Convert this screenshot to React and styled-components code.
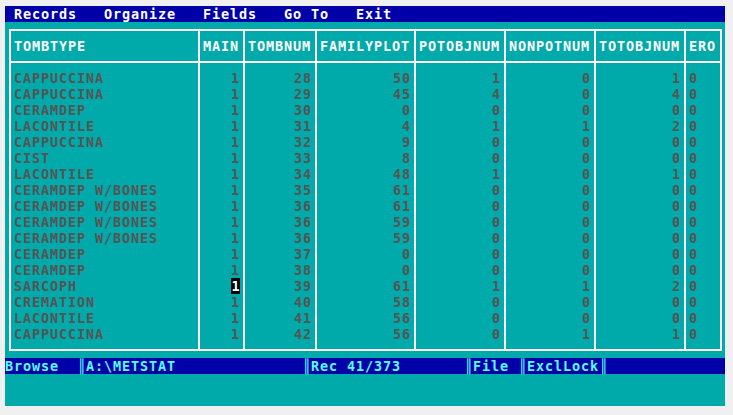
import styled, { createGlobalStyle } from "styled-components";

const GlobalStyle = createGlobalStyle`
  html, body {
    margin: 0;
    padding: 0;
    background: #f0f0f0;
  }
`;

const BLUE = "#0000a8";
const TEAL = "#00aaaa";
const CELL = 9;
const COLUMNS = "189px 45px 72px 99px 90px 90px 90px 34px";

const Screen = styled.div`
  width: 720px;
  height: 400px;
  margin: 6px 0 0 5px;
  background: ${TEAL};
  display: flex;
  flex-direction: column;
  font-family: "DejaVu Sans Mono", "Liberation Mono", monospace;
  font-size: 13.5px;
  letter-spacing: 0.87px;
  font-weight: bold;
  line-height: 16px;
  white-space: pre;
  overflow: hidden;
`;

const MenuBar = styled.nav`
  height: 16px;
  background: ${BLUE};
  color: #ffffff;
  display: flex;
  gap: ${CELL * 3}px;
  padding-left: ${CELL}px;
`;

const MenuItem = styled.span`
  flex: none;
`;

const Box = styled.div`
  margin: 7px 3px 7px 4px;
  border: 2px solid #ffffff;
  display: flex;
  flex-direction: column;
`;

const Row = styled.div`
  display: grid;
  grid-template-columns: ${COLUMNS};
`;

const HeadCell = styled.div`
  padding: 7px 3px;
  color: #ffffff;
  border-bottom: 2px solid #ffffff;
  border-right: 2px solid #ffffff;
  overflow: hidden;
  &:last-child {
    border-right: none;
  }
`;

const DataRow = styled(Row)`
  &:first-child > * {
    padding-top: 7px;
  }
  &:last-child > * {
    padding-bottom: 7px;
  }
`;

const Cell = styled.div`
  height: 16px;
  box-sizing: content-box;
  color: #555555;
  text-align: ${(p) => (p.$num ? "right" : "left")};
  padding: 0 3px;
  border-right: 2px solid #ffffff;
  overflow: hidden;
  &:last-child {
    border-right: none;
  }
`;

const Cursor = styled.span`
  display: inline-block;
  width: ${CELL}px;
  height: 16px;
  letter-spacing: 0;
  text-align: center;
  background: #000000;
  color: #ffffff;
`;

const StatusBar = styled.div`
  height: 16px;
  background: ${BLUE};
  color: #55ffff;
  display: flex;
`;

const Field = styled.span`
  width: ${(p) => p.$cols * CELL}px;
  flex: none;
  overflow: hidden;
`;

const Sep = styled.span`
  width: ${CELL}px;
  flex: none;
  letter-spacing: 0;
  text-align: center;
`;

const headers = [
  "TOMBTYPE",
  "MAIN",
  "TOMBNUM",
  "FAMILYPLOT",
  "POTOBJNUM",
  "NONPOTNUM",
  "TOTOBJNUM",
  "ERO",
];

const rows = [
  ["CAPPUCCINA", 1, 28, 50, 1, 0, 1, 0],
  ["CAPPUCCINA", 1, 29, 45, 4, 0, 4, 0],
  ["CERAMDEP", 1, 30, 0, 0, 0, 0, 0],
  ["LACONTILE", 1, 31, 4, 1, 1, 2, 0],
  ["CAPPUCCINA", 1, 32, 9, 0, 0, 0, 0],
  ["CIST", 1, 33, 8, 0, 0, 0, 0],
  ["LACONTILE", 1, 34, 48, 1, 0, 1, 0],
  ["CERAMDEP W/BONES", 1, 35, 61, 0, 0, 0, 0],
  ["CERAMDEP W/BONES", 1, 36, 61, 0, 0, 0, 0],
  ["CERAMDEP W/BONES", 1, 36, 59, 0, 0, 0, 0],
  ["CERAMDEP W/BONES", 1, 36, 59, 0, 0, 0, 0],
  ["CERAMDEP", 1, 37, 0, 0, 0, 0, 0],
  ["CERAMDEP", 1, 38, 0, 0, 0, 0, 0],
  ["SARCOPH", 1, 39, 61, 1, 1, 2, 0],
  ["CREMATION", 1, 40, 58, 0, 0, 0, 0],
  ["LACONTILE", 1, 41, 56, 0, 0, 0, 0],
  ["CAPPUCCINA", 1, 42, 56, 0, 1, 1, 0],
];

// record under the cursor, and the field it sits on
const cursorRow = 13;
const cursorCol = 1;

const menu = ["Records", "Organize", "Fields", "Go To", "Exit"];

export default function App() {
  return (
    <>
      <GlobalStyle />
      <Screen>
        <MenuBar>
          {menu.map((m) => (
            <MenuItem key={m}>{m}</MenuItem>
          ))}
        </MenuBar>
        <Box>
          <Row>
            {headers.map((h) => (
              <HeadCell key={h}>{h}</HeadCell>
            ))}
          </Row>
          <div>
            {rows.map((r, i) => (
              <DataRow key={i}>
                {r.map((v, j) => (
                  <Cell key={j} $num={j > 0 && j < 7}>
                    {i === cursorRow && j === cursorCol ? <Cursor>{v}</Cursor> : v}
                  </Cell>
                ))}
              </DataRow>
            ))}
          </div>
        </Box>
        <StatusBar>
          <Field $cols={8}>Browse</Field>
          <Sep>║</Sep>
          <Field $cols={24}>A:\METSTAT</Field>
          <Sep>║</Sep>
          <Field $cols={17}>Rec 41/373</Field>
          <Sep>║</Sep>
          <Field $cols={5}>File</Field>
          <Sep>║</Sep>
          <Field $cols={8}>ExclLock</Field>
          <Sep>║</Sep>
        </StatusBar>
      </Screen>
    </>
  );
}
